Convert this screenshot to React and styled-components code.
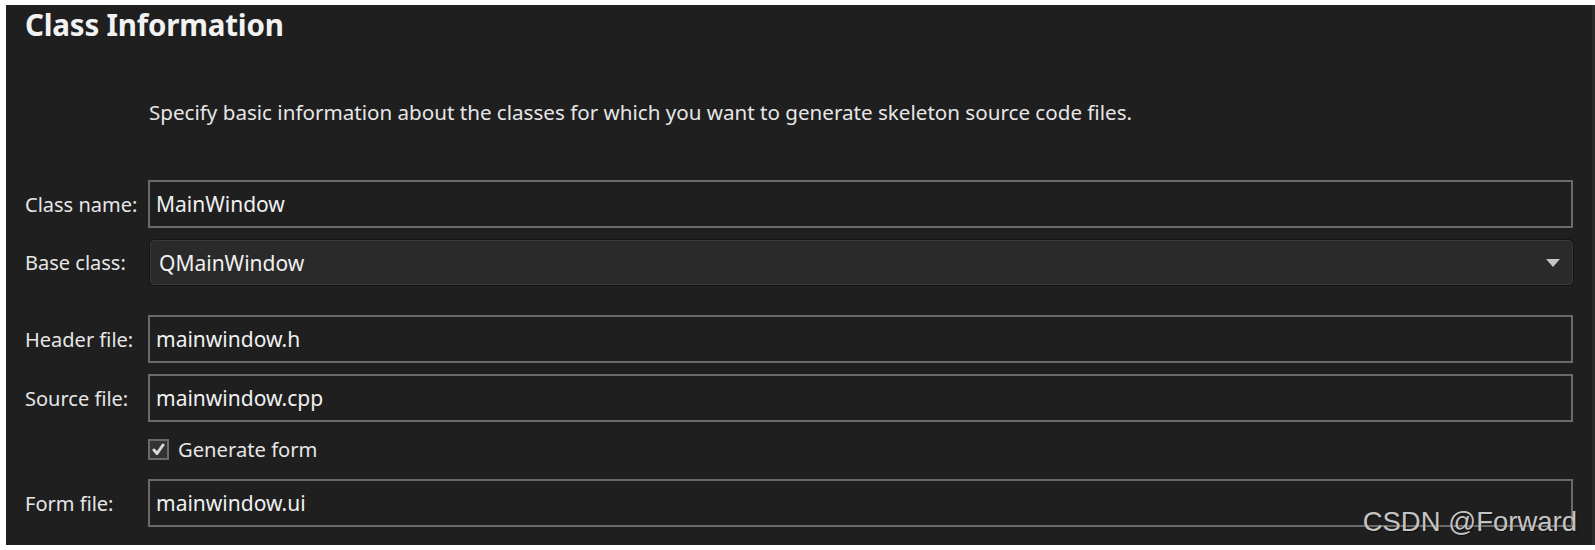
import React from "react";
import styled, { createGlobalStyle } from "styled-components";

const GlobalStyle = createGlobalStyle`
  html, body {
    margin: 0;
    padding: 0;
    background: #ffffff;
  }
  body {
    font-family: "Noto Sans", "Open Sans", sans-serif;
  }
`;

const Panel = styled.div`
  position: relative;
  margin: 5px 0 5px 6px;
  height: 540px;
  box-sizing: border-box;
  background: #1f1f1f;
  border-right: 3px solid #2a2a2a;
  padding: 0 19px 0 19px;
  color: #e8e8e8;
  overflow: hidden;
`;

const Title = styled.h1`
  margin: -1px 0 0 0;
  line-height: 42px;
  font-size: 29.5px;
  font-weight: 700;
  letter-spacing: -0.2px;
  color: #f2f2f2;
`;

const Description = styled.p`
  margin: 0;
  padding: 52px 0 0 124px;
  height: 64px;
  line-height: 28px;
  font-size: 20.6px;
  color: #e6e6e6;
`;

const Form = styled.div`
  display: flex;
  flex-direction: column;
  margin-top: ${({ $top }) => $top}px;
`;

const Row = styled.div`
  display: flex;
  align-items: center;
  height: ${({ $h }) => $h}px;
  margin-top: ${({ $gap }) => $gap || 0}px;
`;

const Label = styled.span`
  width: 123px;
  flex: none;
  font-size: 20px;
  color: #e6e6e6;
  white-space: nowrap;
`;

const TextField = styled.div`
  flex: 1;
  height: 100%;
  box-sizing: border-box;
  border: 2px solid #6a6a6a;
  background: #1f1f1f;
  display: flex;
  align-items: center;
  padding-left: 6px;
  font-size: 21px;
  color: #f0f0f0;
`;

const Combo = styled.div`
  flex: 1;
  height: 100%;
  margin-left: 2px;
  box-sizing: border-box;
  border: 1px solid #3a3a3a;
  border-radius: 4px;
  background: #2a2a2a;
  box-shadow: 0 0 0 1px #141414;
  display: flex;
  align-items: center;
  justify-content: space-between;
  padding: 0 12px 0 8px;
  font-size: 21px;
  color: #f0f0f0;
`;

const CheckRow = styled.label`
  display: flex;
  align-items: center;
  gap: 9px;
  font-size: 20.2px;
  color: #e6e6e6;
`;

const CheckBox = styled.span`
  width: 21px;
  height: 21px;
  box-sizing: border-box;
  border: 2px solid #6a6a6a;
  background: #333333;
  display: flex;
  align-items: center;
  justify-content: center;
`;

const Watermark = styled.div`
  position: absolute;
  right: 15px;
  bottom: 7px;
  font-family: "Liberation Sans", Arial, sans-serif;
  font-size: 27.5px;
  color: #c4c4c4;
  text-shadow: 1px 1px 1px rgba(0, 0, 0, 0.5);
  pointer-events: none;
`;

const Arrow = () => (
  <svg width="14" height="8" viewBox="0 0 14 8">
    <path d="M0 0 L14 0 L7 8 Z" fill="#c6c6c6" />
  </svg>
);

const Check = () => (
  <svg width="13" height="13" viewBox="0 0 13 13">
    <path
      d="M2 7 L5 10.5 L11 2"
      fill="none"
      stroke="#d8d8d8"
      strokeWidth="3"
      strokeLinecap="round"
      strokeLinejoin="round"
    />
  </svg>
);

const App = () => {
  return (
    <>
      <GlobalStyle />
      <Panel>
        <Title>Class Information</Title>
        <Description>
          Specify basic information about the classes for which you want to
          generate skeleton source code files.
        </Description>
        <Form $top={18}>
          <Row $h={48}>
            <Label>Class name:</Label>
            <TextField>MainWindow</TextField>
          </Row>
          <Row $h={45} $gap={12}>
            <Label>Base class:</Label>
            <Combo>
              QMainWindow
              <Arrow />
            </Combo>
          </Row>
          <Row $h={48} $gap={30}>
            <Label>Header file:</Label>
            <TextField>mainwindow.h</TextField>
          </Row>
          <Row $h={48} $gap={11}>
            <Label>Source file:</Label>
            <TextField>mainwindow.cpp</TextField>
          </Row>
          <Row $h={22} $gap={16}>
            <Label />
            <CheckRow>
              <CheckBox>
                <Check />
              </CheckBox>
              Generate form
            </CheckRow>
          </Row>
          <Row $h={48} $gap={19}>
            <Label>Form file:</Label>
            <TextField>mainwindow.ui</TextField>
          </Row>
        </Form>
        <Watermark>CSDN @Forward</Watermark>
      </Panel>
    </>
  );
};

export default App;
